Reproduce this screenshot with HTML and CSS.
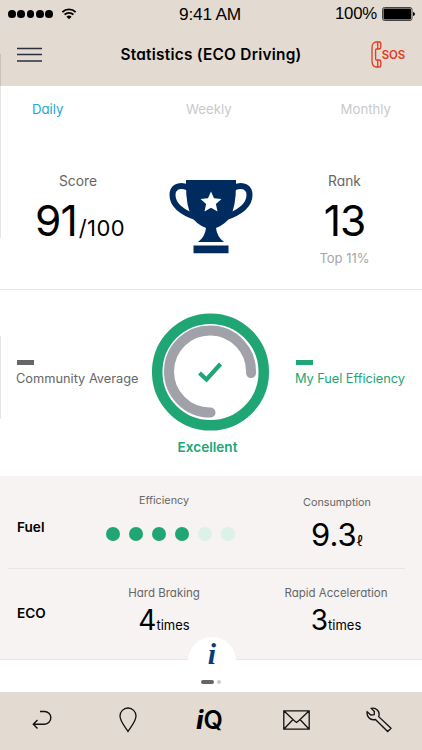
FILE: index.html
```html
<!DOCTYPE html>
<html lang="en">
	<head>
		<meta charset="UTF-8">
		<meta name="viewport" content="width=device-width, initial-scale=1">
		<title>Statistics (ECO Driving)</title>
		<link rel="stylesheet" href="styles.css">
	</head>
	<body>
		<div class="app">
			<div class="status">
				<div class="signal">
					<i></i><i></i><i></i><i></i><i></i>
					<svg class="wifi" width="16" height="12" viewBox="0 0 16 13" fill="none" stroke="#000" stroke-width="2"><path d="M.8 4.4a10.2 10.2 0 0 1 14.4 0M3.2 7.2a6.8 6.8 0 0 1 9.6 0"/><path d="M8 12.2 5.2 9.4a4 4 0 0 1 5.600 0z" fill="#000" stroke="none"/></svg>
				</div>
				<span class="time">9:41 AM</span>
				<div class="power">
					<span>100%</span>
					<svg width="33" height="14" viewBox="0 0 33 14"><rect x=".5" y=".5" width="29.5" height="13" rx="2" fill="none" stroke="#444"/><rect x="1.500" y="1.500" width="27.500" height="11" rx="1"/><path d="M31 5q2 .4 2 2t-2 2z"/></svg>
				</div>
			</div>
			<div class="header">
				<svg class="menu" width="25" height="16" viewBox="0 0 25 16" stroke="#2b303c" stroke-width="1.3"><path d="M0 1.500h25M0 7.500h25M0 14h25"/></svg>
				<h1>Statistics (ECO Driving)</h1>
				<div class="sos">
					<svg width="11" height="27" viewBox="0 0 11 27" fill="none" stroke="#e23b20" stroke-width="1.3"><path d="M4.500 1H8.500Q9.800 1 9.800 2.300V6.200Q9.800 8 8 8H5.500Q4.600 8 4.600 9V18Q4.600 19 5.500 19H8Q9.800 19 9.800 20.800V24.700Q9.800 26 8.500 26H4.500Q1 25 1 20V7Q1 2 4.500 1zM6.700 1v7M6.700 19v7"/></svg>
					<span>SOS</span>
				</div>
			</div>
			<div class="tabs">
				<span class="on">Daily</span>
				<span>Weekly</span>
				<span>Monthly</span>
			</div>
			<div class="score">
				<div class="score-left">
					<p class="name">Score</p>
					<p class="big"><b>91</b><span>/100</span></p>
				</div>
				<svg class="trophy" width="84" height="74" viewBox="0 0 84 74">
					<path fill="none" stroke="#002b5f" stroke-width="6" d="M19 7.500C9 3.500 3.500 8 3.500 15C3.500 25 14 33 29 38M65 7.500C75 3.500 80.500 8 80.500 15C80.500 25 70 33 55 38"/>
					<path fill="#002b5f" d="M17 0H67V5Q67 27 61 37Q57 44 47 48Q48 57 55 62H29Q36 57 37 48Q27 44 23 37Q17 27 17 5zM24.500 65.500H59.500V73.300H24.500z"/>
					<path fill="#fff" d="M42 11.500 45 18.300 52.500 19.100 46.900 24.100 48.500 31.400 42 27.700 35.500 31.400 37.100 24.100 31.500 19.100 39 18.300z"/>
				</svg>
				<div class="score-right">
					<p class="name">Rank</p>
					<p class="big"><b>13</b></p>
					<p class="top">Top 11%</p>
				</div>
			</div>
			<div class="gauge">
				<div class="legend">
					<i></i>
					<span>Community Average</span>
				</div>
				<div class="ring">
					<svg width="118" height="118" viewBox="0 0 118 118" fill="none">
						<circle cx="58.500" cy="59" r="53.300" stroke="#20a674" stroke-width="10.500"/>
						<path d="M58.500 99.500A41 41 0 1 1 99 60" stroke="#a1a1a9" stroke-width="10" stroke-linecap="round"/>
						<path d="M47.500 60 54.500 66.500 68.500 51" stroke="#20a674" stroke-width="4.200"/>
					</svg>
					<p>Excellent</p>
				</div>
				<div class="legend mine">
					<i></i>
					<span>My Fuel Efficiency</span>
				</div>
			</div>
			<div class="table">
				<div class="row fuel">
					<h2>Fuel</h2>
					<div class="cell">
						<p>Efficiency</p>
						<div class="dots"><i></i><i></i><i></i><i></i><i class="off"></i><i class="off"></i></div>
					</div>
					<div class="cell last">
						<p>Consumption</p>
						<div class="num"><b>9.3</b><span>ℓ</span></div>
					</div>
				</div>
				<div class="row eco">
					<h2>ECO</h2>
					<div class="cell">
						<p>Hard Braking</p>
						<div class="num"><b>4</b><span>times</span></div>
					</div>
					<div class="cell last">
						<p>Rapid Acceleration</p>
						<div class="num"><b>3</b><span>times</span></div>
					</div>
				</div>
			</div>
			<div class="pager">
				<i></i><i class="next"></i>
				<span class="info">i</span>
			</div>
			<div class="bar">
				<svg width="20" height="20" viewBox="0 0 20 20" fill="none" stroke="#111" stroke-width="1.400"><path d="M8 1.500h4.500a6.200 6.200 0 0 1 0 12.700H1.500M5.500 10 1.300 14.200 5.500 18.400"/></svg>
				<svg width="18" height="26" viewBox="0 0 18 26" fill="none" stroke="#111" stroke-width="1.300"><path d="M9 24.500C6.500 20 1 14.500 1 9a8 8 0 0 1 16 0C17 14.500 11.500 20 9 24.500z"/></svg>
				<span class="iq"><i>i</i>Q</span>
				<svg width="27" height="20" viewBox="0 0 27 20" fill="none" stroke="#111" stroke-width="1.300"><path d="M.8.800H26.200V19.200H.8zM.8.800 11 10.500 13.500 12.500 16 10.500 26.200.800M.8 19.200 10 9.500M26.200 19.200 17 9.500"/></svg>
				<svg width="26" height="26" viewBox="0 0 27 27" fill="none" stroke="#111" stroke-width="1.400"><path d="M5.500 1.500Q9 .5 12 3.300Q14.500 6 13.200 10L26 22 22.500 25.500 9.800 13Q5.500 14 3 11.200Q.6 8.800 1.200 5L5 8.300 8.500 8 8.700 4.700z"/></svg>
			</div>
		</div>
	</body>
</html>
```
FILE: styles.css
```css
*{
box-sizing: border-box;
}
body{
margin: 0;
background: #fff;
color: #000;
font-family: Inter, "Noto Sans", sans-serif;
font-feature-settings: "cv11";
}
h1,h2,p{
margin: 0;
}
svg{
display: block;
flex: none;
}
.app{
position: relative;
width: 422px;
height: 750px;
overflow: hidden;
}
/* thin shadow lines on the left edge */
.app:before,.app:after{
content: "";
position: absolute;
left: 0;
top: 54px;
width: 1px;
height: 184px;
background: rgba(0,0,0,.1);
}
.app:after{
top: 336px;
height: 83px;
}
.status{
display: grid;
grid-template-columns: 1fr auto 1fr;
align-items: center;
height: 28px;
padding: 0 7px 0 8px;
background: #e3dad1;
font: 17.300px/28px "Liberation Sans", sans-serif;
letter-spacing: -.2px;
}
.time{
padding-right: 3px;
}
.signal,.power{
display: flex;
align-items: center;
}
.signal{
gap: 1.600px;
}
.signal i{
width: 7.700px;
height: 7.700px;
border-radius: 50%;
background: #000;
}
.wifi{
margin-left: 7px;
}
.power{
justify-content: flex-end;
gap: 5px;
}
.power span{
font-size: 16.800px;
letter-spacing: -.2px;
}
.header{
display: grid;
grid-template-columns: 60px 1fr 60px;
align-items: center;
height: 58px;
padding: 0 17px 5px;
background: #e3dad1;
}
h1{
font-size: 15.400px;
font-weight: 600;
letter-spacing: .25px;
text-align: center;
white-space: nowrap;
}
.sos{
display: flex;
align-items: center;
justify-content: flex-end;
color: #e23b20;
font-size: 11.500px;
font-weight: 600;
letter-spacing: -.2px;
}
.tabs{
display: grid;
grid-template-columns: 154px 1fr auto;
height: 47px;
padding: 0 31px 0 32px;
color: #c9c9cb;
font-size: 13.200px;
line-height: 47px;
}
.tabs .on{
color: #23a8cf;
}
.score{
display: grid;
grid-template-columns: 160px 102px 160px;
height: 157px;
padding-top: 38px;
border-bottom: 1px solid #e6e6e6;
text-align: center;
}
.name{
color: #666;
font-size: 13.800px;
line-height: 21px;
}
.score-left .name{
padding-right: 4px;
}
.big{
display: flex;
align-items: baseline;
justify-content: center;
height: 56px;
line-height: 57px;
}
.big b{
font-size: 42.500px;
font-weight: 400;
letter-spacing: -1px;
}
.big span{
margin-left: 2px;
font-size: 22px;
letter-spacing: .4px;
}
.trophy{
margin: 9px 0 0 9px;
}
.score-right{
padding: 0 5px 0 10px;
}
.top{
color: #a5a5ab;
font-size: 13px;
line-height: 21px;
}
.gauge{
display: grid;
grid-template-columns: 136px 117px 1fr;
height: 187px;
padding: 23px 17px 0 16px;
border-bottom: 1px solid #f8f3f2;
}
.legend{
padding-top: 47px;
color: #666;
font-size: 12.800px;
font-feature-settings: normal;
line-height: 18px;
white-space: nowrap;
}
.legend i{
display: block;
width: 17px;
height: 5px;
margin: 0 0 5px 1px;
background: #666;
}
.mine{
padding-left: 26px;
color: #20a674;
letter-spacing: -.05px;
}
.mine i{
background: #20a674;
}
.ring p{
margin-top: 5px;
padding-right: 6px;
color: #20a674;
font-size: 13.600px;
font-weight: 600;
line-height: 22px;
text-align: center;
}
.table{
background: #f6f3f2;
border-bottom: 1px solid #ece7e4;
}
.row{
display: grid;
grid-template-columns: 88px 118px 1fr;
margin: 0 17px 0 8px;
padding-left: 9px;
}
.row h2{
font-size: 13.600px;
font-weight: 600;
line-height: 20px;
}
.cell{
text-align: center;
white-space: nowrap;
}
.cell p{
color: #666;
font-size: 11.500px;
line-height: 16px;
}
.fuel{
height: 92px;
padding-top: 16px;
border-bottom: 1px solid #e9e5e3;
}
.fuel h2{
padding-top: 24px;
}
.fuel .last{
padding-top: 2px;
}
.fuel .cell p{
font-size: 10.800px;
}
.last{
padding-left: 44px;
}
.fuel .last{
padding-left: 46px;
}
.dots{
display: flex;
gap: 9px;
margin: 18px 0 0 1px;
}
.dots i{
flex: none;
width: 14px;
height: 14px;
border-radius: 50%;
background: #20a674;
}
.dots .off{
background: #dcf1e8;
}
.num{
display: flex;
align-items: baseline;
justify-content: center;
}
.num b{
font-size: 31px;
font-weight: 400;
line-height: 47px;
}
.num span{
font-size: 14px;
}
.eco{
height: 90px;
padding-top: 16px;
}
.eco h2{
padding-top: 18px;
}
.eco .num b{
font-size: 28px;
line-height: 38px;
}
.eco .num span{
font-size: 13px;
}
.pager{
position: relative;
display: flex;
justify-content: center;
gap: 3px;
height: 32px;
padding-top: 20px;
background: #fff;
}
.pager i{
width: 13px;
height: 4px;
border-radius: 2px;
background: #666;
}
.pager .next{
width: 4px;
background: #ccc;
}
/* info tab rises over the table edge */
.info{
position: absolute;
top: -23px;
left: 188px;
width: 48px;
height: 24px;
border-radius: 24px 24px 0 0;
background: #fff;
color: #0b3a78;
font: italic bold 30px/34px "Liberation Serif", serif;
text-align: center;
}
.bar{
display: grid;
grid-template-columns: 84px 87px 76px 99px 66px;
align-items: center;
justify-items: center;
height: 58px;
padding-bottom: 2px;
background: #e3dad1;
}
.iq{
padding-left: 1px;
font-size: 25px;
font-weight: 600;
line-height: 28px;
}
.iq i{
font-weight: 800;
}
```
